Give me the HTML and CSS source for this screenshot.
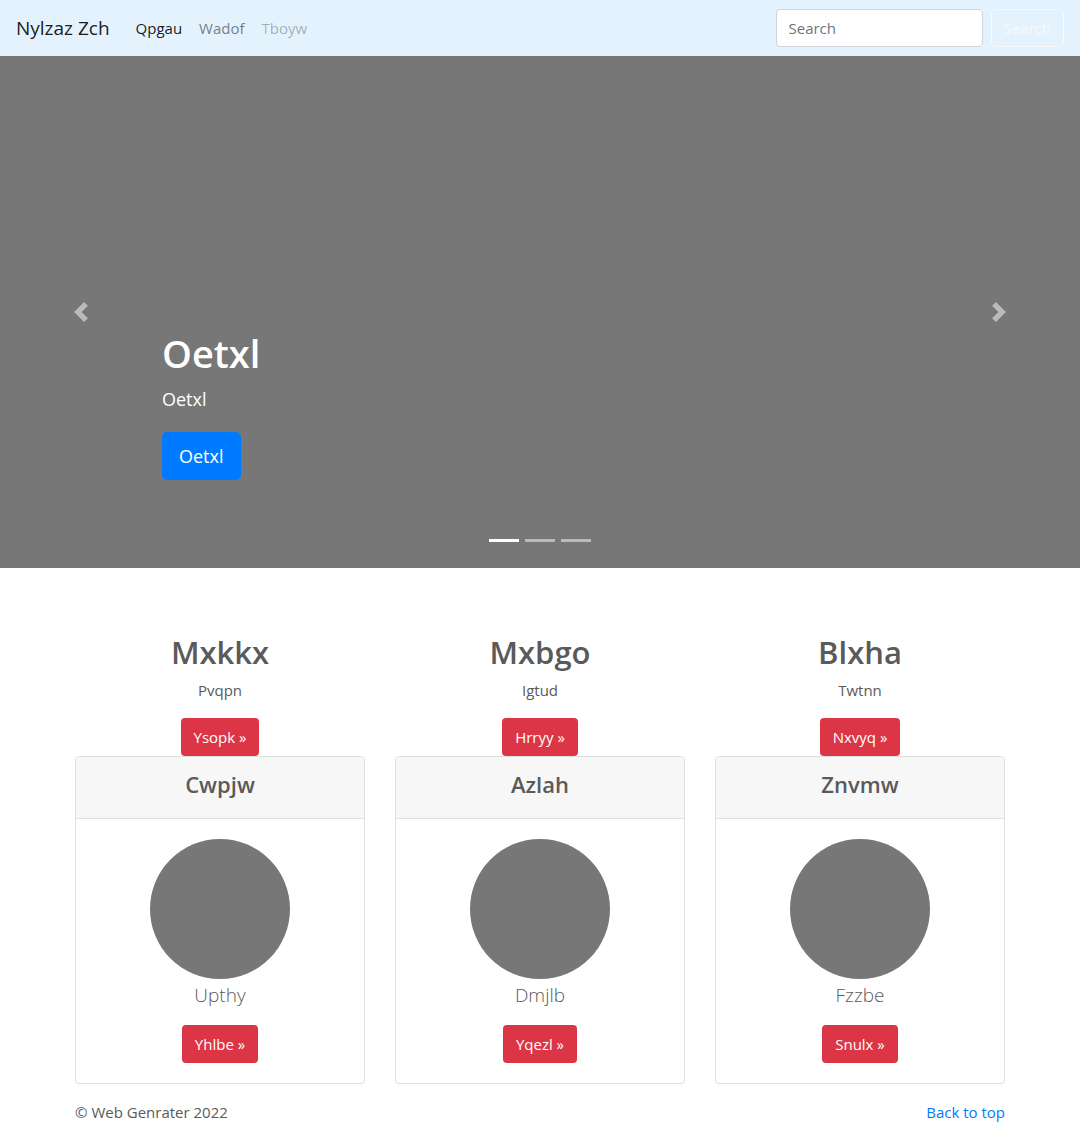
FILE: index.html
```html
<!DOCTYPE html>
<html lang="en">
<head>
  <meta charset="utf-8">
  <meta name="viewport" content="width=device-width, initial-scale=1">
  <title>Nylzaz Zch</title>
  <link rel="stylesheet" href="styles.css">
</head>
<body>
  <header id="top" class="navbar">
    <a class="brand" href="#">Nylzaz Zch</a>
    <nav class="nav">
      <a class="nav-link active" href="#">Qpgau</a>
      <a class="nav-link" href="#">Wadof</a>
      <a class="nav-link disabled" href="#" aria-disabled="true">Tboyw</a>
    </nav>
    <form class="search">
      <input class="search-input" type="search" placeholder="Search" aria-label="Search">
      <button class="btn btn-outline" type="submit">Search</button>
    </form>
  </header>

  <main>
    <section class="carousel">
      <div class="caption">
        <h1>Oetxl</h1>
        <p>Oetxl</p>
        <a class="btn btn-primary" href="#">Oetxl</a>
      </div>
      <div class="indicators">
        <button class="indicator current" type="button" aria-label="Slide 1"></button>
        <button class="indicator" type="button" aria-label="Slide 2"></button>
        <button class="indicator" type="button" aria-label="Slide 3"></button>
      </div>
      <button class="control prev" type="button" aria-label="Previous">
        <svg viewBox="0 0 8 8" width="20" height="20" fill="#fff"><path d="M5.25 0l-4 4 4 4 1.5-1.5L4.25 4l2.5-2.5L5.25 0z"/></svg>
      </button>
      <button class="control next" type="button" aria-label="Next">
        <svg viewBox="0 0 8 8" width="20" height="20" fill="#fff"><path d="M2.75 0l-1.5 1.5L3.75 4l-2.5 2.5L2.75 8l4-4-4-4z"/></svg>
      </button>
    </section>

    <div class="container features">
      <section class="feature">
        <h2>Mxkkx</h2>
        <p>Pvqpn</p>
        <a class="btn btn-danger" href="#">Ysopk »</a>
        <article class="card">
          <h3 class="card-header">Cwpjw</h3>
          <div class="card-body">
            <div class="avatar"></div>
            <p class="lead">Upthy</p>
            <a class="btn btn-danger" href="#">Yhlbe »</a>
          </div>
        </article>
      </section>
      <section class="feature">
        <h2>Mxbgo</h2>
        <p>Igtud</p>
        <a class="btn btn-danger" href="#">Hrryy »</a>
        <article class="card">
          <h3 class="card-header">Azlah</h3>
          <div class="card-body">
            <div class="avatar"></div>
            <p class="lead">Dmjlb</p>
            <a class="btn btn-danger" href="#">Yqezl »</a>
          </div>
        </article>
      </section>
      <section class="feature">
        <h2>Blxha</h2>
        <p>Twtnn</p>
        <a class="btn btn-danger" href="#">Nxvyq »</a>
        <article class="card">
          <h3 class="card-header">Znvmw</h3>
          <div class="card-body">
            <div class="avatar"></div>
            <p class="lead">Fzzbe</p>
            <a class="btn btn-danger" href="#">Snulx »</a>
          </div>
        </article>
      </section>
    </div>
  </main>

  <footer class="container footer">
    <span>© Web Genrater 2022</span>
    <a href="#top">Back to top</a>
  </footer>
</body>
</html>
```
FILE: styles.css
```css
*,
*::before,
*::after {
  box-sizing: border-box;
}

body {
  margin: 0;
  background: #fff;
  color: #5a5a5a;
  font: 400 15px/24px "Segoe UI", "Open Sans", sans-serif;
}

h1, h2, h3, p {
  margin: 0;
}

a {
  color: #007bff;
  text-decoration: none;
}

.container {
  max-width: 960px;
  margin: 0 auto;
  padding: 0 15px;
}

/* Buttons */
.btn {
  display: inline-block;
  padding: 6px 12px;
  border: 1px solid transparent;
  border-radius: 4px;
  color: #fff;
  font: inherit;
  text-align: center;
}

.btn-danger {
  background: #dc3545;
}

.btn-primary {
  padding: 9px 16px;
  border-radius: 5px;
  background: #007bff;
  font-size: 18px;
  line-height: 28px;
}

.btn-outline {
  border-color: #f8f9fa;
  background: transparent;
  color: #f8f9fa;
}

/* Navigation bar */
.navbar {
  display: flex;
  align-items: center;
  min-height: 56px;
  padding: 8px 16px;
  background: #e3f2fd;
}

.brand {
  margin-right: 18px;
  color: rgba(0, 0, 0, .9);
  font-size: 19px;
  line-height: 30px;
}

.nav {
  display: flex;
  flex: 1;
  gap: 1px;
}

.nav-link {
  padding: 8px;
  color: rgba(0, 0, 0, .5);
}

.nav-link.active {
  color: rgba(0, 0, 0, .9);
}

.nav-link.disabled {
  color: rgba(0, 0, 0, .3);
}

.search {
  display: flex;
  gap: 8px;
}

.search-input {
  width: 207px;
  height: 38px;
  padding: 6px 12px;
  border: 1px solid #ced4da;
  border-radius: 4px;
  background: #fff;
  color: #495057;
  font: inherit;
  appearance: none;
}

.search-input::placeholder {
  color: #6c757d;
  opacity: 1;
}

/* Carousel */
.carousel {
  position: relative;
  display: flex;
  flex-direction: column;
  justify-content: flex-end;
  min-height: 512px;
  margin-bottom: 64px;
  padding: 0 15% 88px;
  background: #777;
  color: #fff;
}

.caption h1 {
  margin-bottom: 8px;
  font-size: 38px;
  font-weight: 600;
  line-height: 48px;
}

.caption p {
  margin-bottom: 19px;
  font-size: 18px;
  line-height: 28px;
}

.caption .btn {
  display: block;
  width: fit-content;
}

.indicators {
  position: absolute;
  right: 15%;
  bottom: 26px;
  left: 15%;
  display: flex;
  justify-content: center;
  gap: 6px;
}

.indicator {
  width: 30px;
  height: 3px;
  padding: 0;
  border: 0;
  background: #fff;
  opacity: .5;
}

.indicator.current {
  opacity: 1;
}

.control {
  position: absolute;
  top: 0;
  bottom: 0;
  display: flex;
  align-items: center;
  justify-content: center;
  width: 15%;
  padding: 0;
  border: 0;
  background: none;
  opacity: .5;
}

.prev {
  left: 0;
}

.next {
  right: 0;
}

/* Feature columns */
.features {
  display: grid;
  grid-template-columns: repeat(3, 1fr);
  gap: 30px;
  text-align: center;
}

.feature {
  display: flex;
  flex-direction: column;
  align-items: center;
}

.feature h2 {
  margin-bottom: 6px;
  font-size: 31px;
  font-weight: 600;
  line-height: 40px;
}

.feature p {
  margin-bottom: 16px;
}

.card {
  align-self: stretch;
  border: 1px solid #dfdfdf;
  border-radius: 4px;
}

.card-header {
  padding: 12px 20px 19px;
  border-bottom: 1px solid #dfdfdf;
  border-radius: 3px 3px 0 0;
  background: #f7f7f7;
  font-size: 22px;
  font-weight: 600;
  line-height: 30px;
}

.card-body {
  display: flex;
  flex-direction: column;
  align-items: center;
  padding: 20px;
}

.avatar {
  width: 140px;
  height: 140px;
  border-radius: 50%;
  background: #777;
}

.card-body .lead {
  margin-bottom: 14px;
  font-size: 19px;
  font-weight: 300;
  line-height: 32px;
}

.footer {
  display: flex;
  justify-content: space-between;
  padding-top: 16px;
}
```
